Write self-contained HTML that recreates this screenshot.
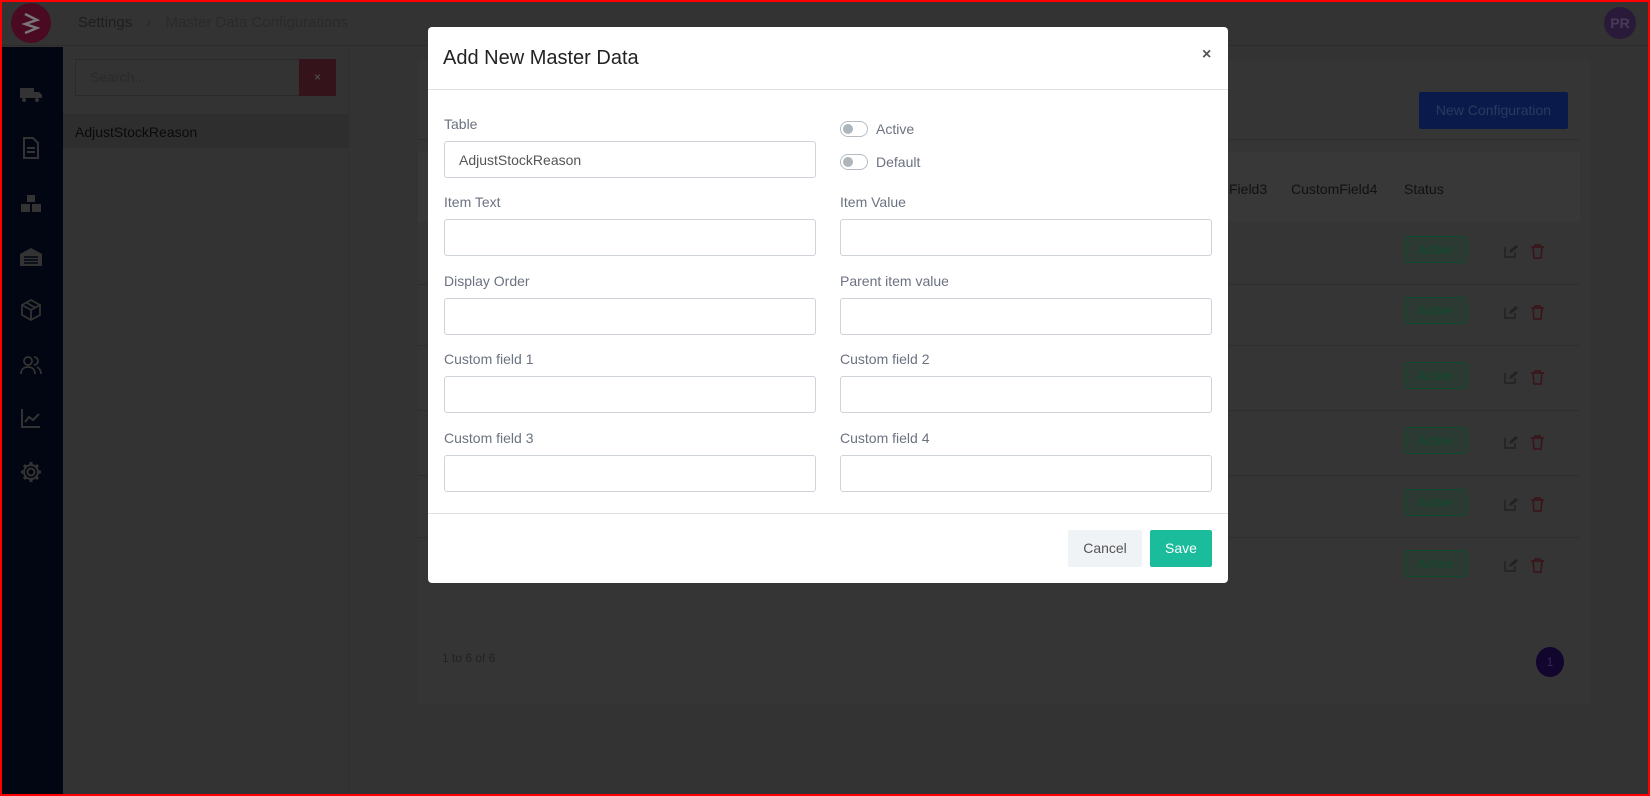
<!DOCTYPE html>
<html><head><meta charset="utf-8">
<style>
*{box-sizing:border-box;margin:0;padding:0}
html,body{background:#333}
body{width:1650px;height:796px;overflow:hidden;font-family:"Liberation Sans",sans-serif;position:relative}
.abs{position:absolute}
.frame{position:absolute;left:0;top:0;width:1650px;height:796px;border:2px solid #f00;z-index:50;pointer-events:none}
.lbl{position:absolute;font-size:14px;color:#6b7280}
.inp{position:absolute;height:37px;width:372px;border:1px solid #ced4da;border-radius:3px;background:#fff}
.tg{position:absolute;width:28px;height:16px;border:1px solid #b8bcc2;border-radius:8px;background:#fff}
.tg:after{content:"";position:absolute;left:2px;top:2px;width:10px;height:10px;border-radius:50%;background:#adb5bd}
.badge{position:absolute;left:1404px;width:63px;height:27px;border:1px solid #0c4a2c;border-radius:4px;background:#2d3a33;color:#0c4a2c;font-size:13px;text-align:center;line-height:25px}
.row{position:absolute;left:418px;width:1162px;height:1px;background:#2e2e2e}
.ic{position:absolute;left:19px;width:24px;height:24px}
</style></head><body>
<div class="abs" style="left:0;top:0;width:1650px;height:46px;background:#333;border-bottom:1px solid #2c2c2c"></div>
<svg class="abs" style="left:11px;top:3px" width="40" height="40" viewBox="0 0 40 40"><circle cx="20" cy="20" r="20" fill="#4a0a22"/><path d="M14 11l12 6-12 4 12 4-12 5" fill="none" stroke="#777" stroke-width="2.5"/></svg>
<div class="abs" style="left:78px;top:14px;font-size:15px;color:#1e1e1e">Settings <span style="margin:0 10px;color:#2a2a2a">›</span> <span style="color:#2a2a2a">Master Data Configurations</span></div>
<div class="abs" style="left:1604px;top:7px;width:32px;height:32px;border-radius:50%;background:#2a1a3a;color:#4a3a5a;font-size:14px;font-weight:bold;text-align:center;line-height:32px">PR</div>
<div class="abs" style="left:0;top:47px;width:63px;height:749px;background:#020612"></div>
<svg class="ic" style="top:82px" viewBox="0 0 24 24"><path d="M1 6h14v10H1zM15 10h5l3 3v3h-8z" fill="#333"/><circle cx="5" cy="18" r="2" fill="#333"/><circle cx="18" cy="18" r="2" fill="#333"/></svg>
<svg class="ic" style="top:136px" viewBox="0 0 24 24"><path d="M5 2h9l5 5v15H5z" fill="none" stroke="#333" stroke-width="2"/><path d="M8 12h8M8 16h8" stroke="#333" stroke-width="2"/></svg>
<svg class="ic" style="top:192px" viewBox="0 0 24 24"><path d="M8 3h8v7H8zM2 12h9v8H2zM13 12h9v8h-9z" fill="#333"/></svg>
<svg class="ic" style="top:245px" viewBox="0 0 24 24"><path d="M1 9l11-6 11 6v12H1z" fill="#333"/><path d="M5 12h14M5 15h14M5 18h14" stroke="#020612" stroke-width="1.5"/></svg>
<svg class="ic" style="top:298px" viewBox="0 0 24 24"><path d="M12 2l9 5v10l-9 5-9-5V7zM3 7l9 5 9-5M12 12v10M7 4.5l9 5" fill="none" stroke="#333" stroke-width="1.8"/></svg>
<svg class="ic" style="top:353px" viewBox="0 0 24 24"><circle cx="9" cy="8" r="4" fill="none" stroke="#333" stroke-width="1.8"/><path d="M2 21c0-5 3-7 7-7s7 2 7 7M15 4a4 4 0 010 8M18 14c2 1 4 3 4 7" fill="none" stroke="#333" stroke-width="1.8"/></svg>
<svg class="ic" style="top:406px" viewBox="0 0 24 24"><path d="M3 3v18h18M6 16l4-5 4 3 6-6" fill="none" stroke="#333" stroke-width="2"/></svg>
<svg class="ic" style="top:460px" viewBox="0 0 24 24"><circle cx="12" cy="12" r="3.5" fill="none" stroke="#333" stroke-width="2"/><path d="M12 2v3M12 19v3M2 12h3M19 12h3M5 5l2 2M17 17l2 2M5 19l2-2M17 7l2-2" stroke="#333" stroke-width="3"/><circle cx="12" cy="12" r="7" fill="none" stroke="#333" stroke-width="2"/></svg>
<div class="abs" style="left:63px;top:47px;width:286px;height:749px;background:#333;border-right:1px solid #2e2e2e"></div>
<div class="abs" style="left:75px;top:59px;width:225px;height:37px;border:1px solid #2a2a2a;font-size:14px;color:#2a2a2a;padding:9px 14px">Search...</div>
<div class="abs" style="left:299px;top:59px;width:37px;height:37px;background:#34141a;color:#555;text-align:center;line-height:37px;font-size:12px">×</div>
<div class="abs" style="left:63px;top:114px;width:285px;height:34px;background:#2e2e2e;font-size:14px;color:#0a0a0a;padding:10px 12px">AdjustStockReason</div>
<div class="abs" style="left:418px;top:60px;width:1172px;height:643px;background:#353535"></div>
<div class="abs" style="left:1419px;top:92px;width:149px;height:37px;background:#0a1a4a;color:#2a3a60;font-size:14px;text-align:center;line-height:37px;border-radius:2px">New Configuration</div>
<div class="row" style="top:139px"></div>
<div class="abs" style="left:418px;top:152px;width:1162px;height:70px;background:#383838"></div>
<div class="abs" style="left:1229px;top:181px;font-size:14px;color:#111">Field3</div>
<div class="abs" style="left:1291px;top:181px;font-size:14px;color:#111">CustomField4</div>
<div class="abs" style="left:1404px;top:181px;font-size:14px;color:#111">Status</div>
<div class="badge" style="top:236px">Active</div>
<div class="badge" style="top:297px">Active</div>
<div class="badge" style="top:362px">Active</div>
<div class="badge" style="top:427px">Active</div>
<div class="badge" style="top:489px">Active</div>
<div class="badge" style="top:550px">Active</div>
<div class="row" style="top:284px"></div><div class="row" style="top:345px"></div><div class="row" style="top:410px"></div><div class="row" style="top:475px"></div><div class="row" style="top:537px"></div>
<svg class="abs" style="left:0;top:0" width="1650" height="796">
<defs>
<g id="ed"><path d="M0 2v10h10V7" fill="none" stroke="#222" stroke-width="1.5"/><path d="M4 8l1-3 6-5 2 2-6 5z" fill="#222"/></g>
<g id="tr"><path d="M0 3h13M4 3V1h5v2M2 3l1 11h7l1-11" fill="none" stroke="#3a1218" stroke-width="1.5"/></g>
</defs>
<use href="#ed" x="1505" y="245"/><use href="#tr" x="1531" y="244"/>
<use href="#ed" x="1505" y="306"/><use href="#tr" x="1531" y="305"/>
<use href="#ed" x="1505" y="371"/><use href="#tr" x="1531" y="370"/>
<use href="#ed" x="1505" y="436"/><use href="#tr" x="1531" y="435"/>
<use href="#ed" x="1505" y="498"/><use href="#tr" x="1531" y="497"/>
<use href="#ed" x="1505" y="559"/><use href="#tr" x="1531" y="558"/>
</svg>
<div class="abs" style="left:442px;top:651px;font-size:12px;color:#222">1 to 6 of 6</div>
<div class="abs" style="left:1536px;top:647px;width:28px;height:30px;border-radius:50%;background:#12052e;color:#3a2a5a;font-size:12px;text-align:center;line-height:30px">1</div>
<div class="abs" style="left:428px;top:27px;width:800px;height:556px;background:#fff;border-radius:4px">
 <div class="abs" style="left:15px;top:20px;font-size:20px;color:#222">Add New Master Data</div>
 <div class="abs" style="left:774px;top:19px;font-size:16px;font-weight:bold;color:#555">×</div>
 <div class="abs" style="left:0;top:62px;width:800px;height:1px;background:#dee2e6"></div>
 <div class="lbl" style="left:16px;top:89px">Table</div>
 <div class="inp" style="left:16px;top:114px;font-size:14px;color:#555;padding:10px 14px">AdjustStockReason</div>
 <div class="tg" style="left:412px;top:94px"></div><div class="lbl" style="left:448px;top:94px">Active</div>
 <div class="tg" style="left:412px;top:127px"></div><div class="lbl" style="left:448px;top:127px">Default</div>
 <div class="lbl" style="left:16px;top:167px">Item Text</div><div class="inp" style="left:16px;top:192px"></div>
 <div class="lbl" style="left:412px;top:167px">Item Value</div><div class="inp" style="left:412px;top:192px"></div>
 <div class="lbl" style="left:16px;top:246px">Display Order</div><div class="inp" style="left:16px;top:271px"></div>
 <div class="lbl" style="left:412px;top:246px">Parent item value</div><div class="inp" style="left:412px;top:271px"></div>
 <div class="lbl" style="left:16px;top:324px">Custom field 1</div><div class="inp" style="left:16px;top:349px"></div>
 <div class="lbl" style="left:412px;top:324px">Custom field 2</div><div class="inp" style="left:412px;top:349px"></div>
 <div class="lbl" style="left:16px;top:403px">Custom field 3</div><div class="inp" style="left:16px;top:428px"></div>
 <div class="lbl" style="left:412px;top:403px">Custom field 4</div><div class="inp" style="left:412px;top:428px"></div>
 <div class="abs" style="left:0;top:486px;width:800px;height:1px;background:#dee2e6"></div>
 <div class="abs" style="left:640px;top:503px;width:74px;height:37px;background:#f0f3f6;border-radius:2px;color:#555;font-size:14px;text-align:center;line-height:37px">Cancel</div>
 <div class="abs" style="left:722px;top:503px;width:62px;height:37px;background:#1abc9c;border-radius:2px;color:#fff;font-size:14px;text-align:center;line-height:37px">Save</div>
</div>
<div class="frame"></div>
</body></html>
